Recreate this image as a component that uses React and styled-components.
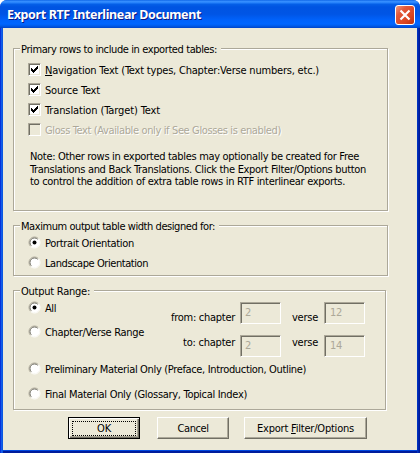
import React, { useLayoutEffect, useRef } from "react";
import styled, { createGlobalStyle, css } from "styled-components";

const Page = createGlobalStyle`
  * { box-sizing: border-box; }
  body {
    margin: 0;
    background: #fff;
    font: 11px/13px "DejaVu Sans Condensed", "DejaVu Sans", sans-serif;
    font-stretch: condensed;
    color: #000;
    overflow: hidden;
  }
`;

const Dialog = styled.div`
  width: 420px;
  height: 453px;
  display: flex;
  flex-direction: column;
  padding: 0 3px 3px;
  border-radius: 7px 7px 0 0;
  overflow: hidden;
  background: linear-gradient(90deg, #0831d9 0, #0831d9 1px, #1660ee 1px, #0855dd 3px, #0855dd 417px, #0036c8 417px, #001590 420px);
`;

const TitleBar = styled.header`
  height: 28px;
  flex: none;
  margin: 0 -3px;
  padding: 3px 5px 0 7px;
  display: flex;
  justify-content: space-between;
  align-items: center;
  background: linear-gradient(
    180deg, #0058e0 0, #3a91ff 1px, #2480fa 3px, #0560e8 4px, #0054e2 7px,
    #0055e5 14px, #0062fb 20px, #0066ff 24px, #005ae8 26px, #0043c8 28px
  );
`;

const Title = styled.h1`
  margin: 0 0 2px;
  font: bold 12.5px/18px "Noto Sans", sans-serif;
  color: #fff;
  text-shadow: 1px 1px 0 #0a1883;
`;

const CloseButton = styled.button`
  width: 20px;
  height: 20px;
  margin-bottom: 1px;
  padding: 0;
  display: flex;
  border: 1px solid #fff;
  border-radius: 3px;
  background: linear-gradient(135deg, #f09a80 0, #e2593a 30%, #da4520 70%, #b93010 100%);
`;

const Body = styled.main`
  flex: 1;
  padding: 20px 0 0 10px;
  background: #ece9d8;
  box-shadow: 0 1px 0 #0048e0, 0 3px 0 #001c9c;
`;

const Group = styled.section`
  width: ${(p) => p.$w}px;
  height: ${(p) => p.$h}px;
  margin-bottom: ${(p) => p.$gap}px;
  padding: 0 0 0 14px;
  border: 1px solid #aca899;
  box-shadow: 1px 1px 0 #fff, inset 1px 1px 0 #fff;
`;

const Legend = styled.h2`
  width: fit-content;
  height: 13px;
  margin: -6px 0 0 -8px;
  padding: 0 4px 0 1px;
  font: inherit;
  background: #ece9d8;
`;

const Option = styled.label`
  height: 13px;
  margin-top: ${(p) => p.$top}px;
  display: flex;
  align-items: flex-start;
  gap: 4px;
  ${(p) => p.$disabled && css`
    color: #aca899;
    text-shadow: 1px 1px 0 #fff;
  `}
`;

const OptionText = styled.span`
  padding-top: 1px;
`;

const CheckBox = styled.span`
  width: 13px;
  height: 13px;
  flex: none;
  display: flex;
  border: 1px solid;
  border-color: #aca899 #fff #fff #aca899;
  box-shadow: inset 1px 1px 0 #716f64, inset -1px -1px 0 #ece9d8;
  background: ${(p) => (p.$disabled ? "#ece9d8" : "#fff")};
`;

const Note = styled.p`
  margin: 15px 0 0 2px;
  line-height: 12.5px;
`;

const Columns = styled.div`
  display: flex;
`;

const Column = styled.div`
  width: ${(p) => p.$w}px;
`;

const RangeRow = styled.div`
  height: 22px;
  margin-top: ${(p) => p.$top}px;
  display: grid;
  grid-template-columns: 69px 52px 32px 41px;
`;

const RangeLabel = styled.span`
  padding-top: ${(p) => p.$drop}px;
  padding-left: ${(p) => p.$indent || 0}px;
`;

const Field = styled.span`
  width: 41px;
  height: 22px;
  padding: 3px 0 0 ${(p) => p.$pad}px;
  border: 1px solid;
  border-color: #aca899 #fff #fff #aca899;
  box-shadow: inset 1px 1px 0 #716f64;
  color: #aca899;
`;

const Actions = styled.footer`
  display: flex;
  align-items: flex-start;
  padding-left: 55px;
`;

const Button = styled.button`
  width: ${(p) => p.$w}px;
  height: 22px;
  margin: 0 ${(p) => p.$gap}px 0 0;
  padding: 0;
  display: flex;
  align-items: center;
  justify-content: center;
  font: inherit;
  color: #000;
  background: #ece9d8;
  border: 1px solid;
  border-color: #fff #716f64 #716f64 #fff;
  box-shadow: inset -1px -1px 0 #aca899;
  ${(p) => p.$primary && css`
    border-color: #000;
    box-shadow: inset 1px 1px 0 #fff, inset -1px -1px 0 #716f64, inset -2px -2px 0 #aca899;
  `}
`;

const Focus = styled.span`
  width: 64px;
  height: 15px;
  display: flex;
  align-items: center;
  justify-content: center;
  border: 1px dotted #000;
`;

const Run = styled.span`
  display: inline-block;
  white-space: nowrap;
  u { text-underline-offset: 1px; text-decoration-thickness: 1px; }
`;

/* A line of text tracked so that it fills the given width. */
function Fit({ w, children }) {
  const ref = useRef(null);
  useLayoutEffect(() => {
    const el = ref.current;
    el.style.letterSpacing = "0px";
    const count = el.textContent.length;
    const spacing = (w - el.getBoundingClientRect().width) / count;
    el.style.letterSpacing = `${spacing}px`;
  }, [w]);
  return <Run ref={ref}>{children}</Run>;
}

function Check({ top, w, checked, disabled, children }) {
  return (
    <Option $top={top} $disabled={disabled}>
      <CheckBox $disabled={disabled}>
        {checked && (
          <svg width="11" height="11" shapeRendering="crispEdges">
            <path d="M2 4h1v1h1v1h1v-1h1v-1h1v-1h1v-1h1v3h-1v1h-1v1h-1v1h-1v1h-1v-1h-1v-1h-1z" />
          </svg>
        )}
      </CheckBox>
      <OptionText><Fit w={w}>{children}</Fit></OptionText>
    </Option>
  );
}

function Radio({ top, w, checked, children }) {
  return (
    <Option $top={top}>
      <svg width="13" height="13" viewBox="0 0 13 13">
        <circle cx="6.5" cy="6.5" r="5" fill="#fff" />
        <path d="M2.6 10.4A5.5 5.5 0 0 1 10.4 2.6" fill="none" stroke="#aca899" />
        <path d="M3.3 9.7A4.5 4.5 0 0 1 9.7 3.3" fill="none" stroke="#716f64" />
        <path d="M2.6 10.4A5.5 5.5 0 0 0 10.4 2.6" fill="none" stroke="#fff" />
        {checked && <circle cx="6.5" cy="6.5" r="2" />}
      </svg>
      <OptionText><Fit w={w}>{children}</Fit></OptionText>
    </Option>
  );
}

export default function App() {
  return (
    <>
      <Page />
      <Dialog>
        <TitleBar>
          <Title><Fit w={194}>Export RTF Interlinear Document</Fit></Title>
          <CloseButton aria-label="Close">
            <svg width="18" height="18">
              <path d="M4.5 4.5L13.5 13.5M13.5 4.5L4.5 13.5" stroke="#fff" strokeWidth="2.2" />
            </svg>
          </CloseButton>
        </TitleBar>
        <Body>
          <Group $w={375} $h={163} $gap={14}>
            <Legend><Fit w={196}>Primary rows to include in exported tables:</Fit></Legend>
            <Check top={7} w={274} checked><u>N</u>avigation Text (Text types, Chapter:Verse numbers, etc.)</Check>
            <Check top={7} w={55} checked>Source Text</Check>
            <Check top={7} w={115} checked>Translation (Target) Text</Check>
            <Check top={7} w={236} disabled>Gloss Text (Available only if See Glosses is enabled)</Check>
            <Note>
              <Fit w={329}>Note: Other rows in exported tables may optionally be created for Free</Fit><br />
              <Fit w={336}>Translations and Back Translations. Click the Export Filter/Options button</Fit><br />
              <Fit w={315}>to control the addition of extra table rows in RTF interlinear exports.</Fit>
            </Note>
          </Group>
          <Group $w={375} $h={51} $gap={14}>
            <Legend><Fit w={194}>Maximum output table width designed for:</Fit></Legend>
            <Radio top={3} w={89} checked>Portrait Orientation</Radio>
            <Radio top={7} w={103}>Landscape Orientation</Radio>
          </Group>
          <Group $w={373} $h={120} $gap={7}>
            <Legend><Fit w={69}>Output Range:</Fit></Legend>
            <Columns>
              <Column $w={143}>
                <Radio top={3} w={11} checked>All</Radio>
                <Radio top={11} w={99}>Chapter/Verse Range</Radio>
              </Column>
              <Column $w={194}>
                <RangeRow $top={4}>
                  <RangeLabel $drop={9}><Fit w={64}>from: chapter</Fit></RangeLabel>
                  <Field $pad={4}><Fit w={6}>2</Fit></Field>
                  <RangeLabel $drop={9}><Fit w={26}>verse</Fit></RangeLabel>
                  <Field $pad={5}><Fit w={12}>12</Fit></Field>
                </RangeRow>
                <RangeRow $top={11}>
                  <RangeLabel $drop={1} $indent={12}><Fit w={52}>to: chapter</Fit></RangeLabel>
                  <Field $pad={4}><Fit w={6}>2</Fit></Field>
                  <RangeLabel $drop={1}><Fit w={26}>verse</Fit></RangeLabel>
                  <Field $pad={5}><Fit w={12}>14</Fit></Field>
                </RangeRow>
              </Column>
            </Columns>
            <Radio top={5} w={261}>Preliminary Material Only (Preface, Introduction, Outline)</Radio>
            <Radio top={12} w={202}>Final Material Only (Glossary, Topical Index)</Radio>
          </Group>
          <Actions>
            <Button $w={72} $gap={17} $primary><Focus><Fit w={14}>OK</Fit></Focus></Button>
            <Button $w={72} $gap={15}><Fit w={31}>Cancel</Fit></Button>
            <Button $w={123} $gap={0}><Fit w={97}>Export <u>F</u>ilter/Options</Fit></Button>
          </Actions>
        </Body>
      </Dialog>
    </>
  );
}
